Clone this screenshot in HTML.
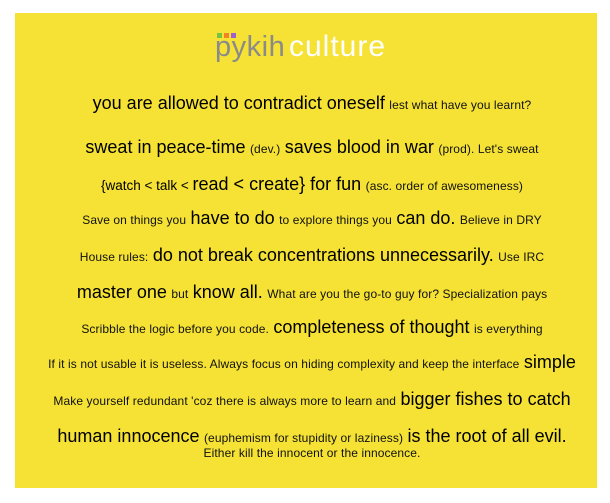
<!DOCTYPE html>
<html><head><meta charset="utf-8"><style>
html,body{margin:0;padding:0;background:#fff;width:610px;height:503px;overflow:hidden}
#box{position:absolute;left:15px;top:13px;width:582px;height:475px;background:#f5e234}
.l{position:absolute;left:6px;width:582px;text-align:center;font-family:"Liberation Sans",Arial,sans-serif;color:#000;white-space:nowrap;line-height:1}
.b{font-size:18px}
.s{font-size:12px;color:#111;letter-spacing:0.1px}
.m{font-size:13.5px}
.logo{position:absolute;top:20px;font-family:"Liberation Sans",sans-serif;font-size:29px;line-height:1;letter-spacing:0.5px}
.dots{position:absolute;top:20px;left:202px}
.dots i{display:inline-block;width:5px;height:5px;margin-right:2px;vertical-align:top}
</style></head><body>
<div id="box">
<div class="logo" style="left:200px;color:#8a8a8a">pykih</div>
<div class="logo" style="left:274px;color:#fff;font-size:30px;letter-spacing:1px;top:19px">culture</div>
<div class="dots"><i style="background:#7ac143"></i><i style="background:#f58220"></i><i style="background:#a05fd0"></i></div>
<div class="l" style="top:81px"><span class="b">you are allowed to contradict oneself</span> <span class="s">lest what have you learnt?</span></div>
<div class="l" style="top:125px"><span class="b">sweat in peace-time</span> <span class="s">(dev.)</span> <span class="b">saves blood in war</span> <span class="s">(prod). Let's sweat</span></div>
<div class="l" style="top:162px"><span class="m">{watch &lt; talk &lt; </span><span class="b">read &lt; create} for fun</span> <span class="s">(asc. order of awesomeness)</span></div>
<div class="l" style="top:196px"><span class="s">Save on things you</span> <span class="b">have to do</span> <span class="s">to explore things you</span> <span class="b">can do.</span> <span class="s">Believe in DRY</span></div>
<div class="l" style="top:233px"><span class="s">House rules:</span> <span class="b">do not break concentrations unnecessarily.</span> <span class="s">Use IRC</span></div>
<div class="l" style="top:270px"><span class="b">master one</span> <span class="s">but</span> <span class="b">know all.</span> <span class="s">What are you the go-to guy for? Specialization pays</span></div>
<div class="l" style="top:305px"><span class="s">Scribble the logic before you code.</span> <span class="b">completeness of thought</span> <span class="s">is everything</span></div>
<div class="l" style="top:340px"><span class="s">If it is not usable it is useless. Always focus on hiding complexity and keep the interface</span> <span class="b">simple</span></div>
<div class="l" style="top:377px"><span class="s">Make yourself redundant 'coz there is always more to learn and</span> <span class="b">bigger fishes to catch</span></div>
<div class="l" style="top:414px"><span class="b">human innocence</span> <span class="s">(euphemism for stupidity or laziness)</span> <span class="b">is the root of all evil.</span></div>
<div class="l" style="top:432px"><span class="s">Either kill the innocent or the innocence.</span></div>
</div>
</body></html>
